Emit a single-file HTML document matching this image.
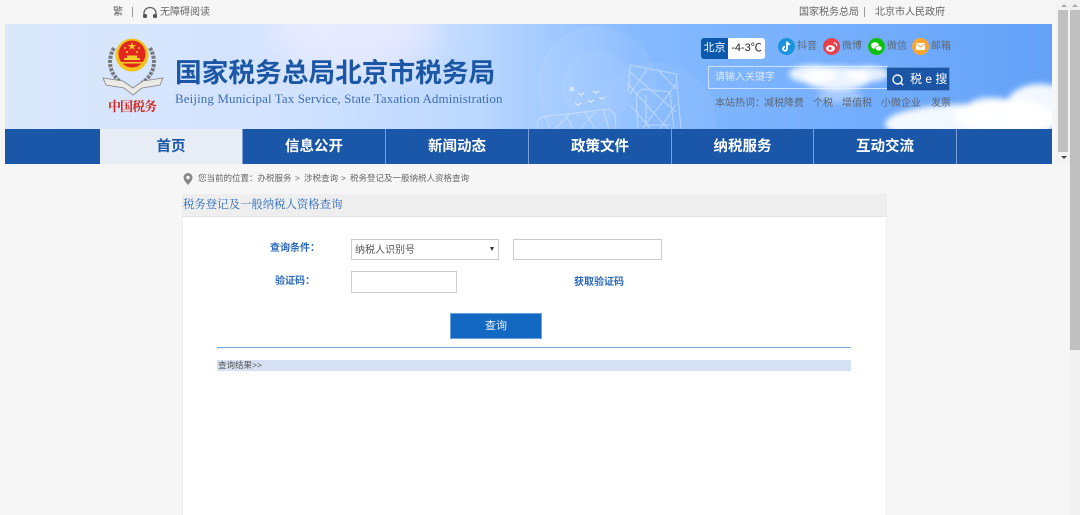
<!DOCTYPE html>
<html lang="zh-CN"><head><meta charset="utf-8"><title>税务登记及一般纳税人资格查询</title>
<style>
*{margin:0;padding:0;box-sizing:border-box}
html,body{width:1080px;height:515px;overflow:hidden;background:#f6f6f6;font-family:"Liberation Sans","Noto Sans CJK SC",sans-serif}
.a{position:absolute;white-space:nowrap}
#root{position:relative;width:1080px;height:515px;overflow:hidden}
.t{font-size:10px;color:#5d6670;line-height:14px}
.c{font-size:8.500px;line-height:12px;color:#666;top:172px}
.nav{top:129px;height:35px;line-height:36px;text-align:center;font-size:14.500px;font-weight:bold;color:#fff;border-right:1px solid #7a9fd0}
.lb{font-size:10px;line-height:14px;font-weight:bold;color:#2a68b8}
.ip{background:#fff;border:1px solid #ccc}
</style></head><body><div id="root">

<div class="a t" style="left:113px;top:5px;color:#666;margin-top:1px">繁</div>
<div class="a" style="left:132px;top:7px;width:1px;height:10px;background:#999"></div>
<svg class="a" style="left:142px;top:6px" width="16" height="13" viewBox="0 0 16 13"><path d="M2 9V7a6 5.500 0 0 1 12 0v2" fill="none" stroke="#666" stroke-width="1.300"/><rect x="1" y="8" width="4" height="4" rx="1.500" fill="#555"/><rect x="11" y="8" width="4" height="4" rx="1.500" fill="#555"/></svg>
<div class="a t" style="left:160px;top:6px;color:#666">无障碍阅读</div>
<div class="a t" style="left:799px;top:6px;color:#666">国家税务总局</div>
<div class="a" style="left:864px;top:7px;width:1px;height:10px;background:#999"></div>
<div class="a t" style="left:875px;top:6px;color:#666">北京市人民政府</div>

<svg class="a" style="left:5px;top:24px" width="1047" height="105" viewBox="0 0 1047 105">
<defs>
<linearGradient id="g" x1="0" x2="1" y1="0" y2="0"><stop offset="0" stop-color="#dbe8fb"/><stop offset=".25" stop-color="#d3e3ff"/><stop offset=".45" stop-color="#bcd8ff"/><stop offset=".6" stop-color="#86baff"/><stop offset=".8" stop-color="#74aefd"/><stop offset="1" stop-color="#64a2f8"/></linearGradient>
<filter id="b" x="-20%" y="-40%" width="140%" height="180%"><feGaussianBlur stdDeviation="3"/></filter>
<filter id="b2" x="-30%" y="-30%" width="160%" height="160%"><feGaussianBlur stdDeviation="18"/></filter>
</defs>
<rect width="1047" height="105" fill="url(#g)"/>
<ellipse cx="350" cy="5" rx="85" ry="45" fill="#f4efff" opacity=".7" filter="url(#b2)"/>
<circle cx="592" cy="62" r="60" fill="#fff" opacity=".07"/>
<circle cx="592" cy="62" r="36" fill="#fff" opacity=".06"/>
<circle cx="650" cy="100" r="62" fill="#fff" opacity=".05"/>
<circle cx="567" cy="65" r="2.500" fill="#fff" opacity=".5"/>
<g fill="none" stroke="#dcebff" stroke-width="1" opacity=".6">
<path d="M623 68l2-27 46 9 5 55M633 105l-2-34 6-6 28 3 4 37M641 71v30h24"/>
<path d="M625 48l46 40M623 60l40 45M652 45l19 20M626 82l20 23M642 45l-17 25M671 60l-34 45M671 80l-16 25"/>
<path d="M533 105l-1-6 4-6 68-8 6 5 1 15M540 92l5 13M560 90l8 15M580 88l10 17M598 86l6 19M550 105l15-15M575 105l15-17"/>
</g>
<path d="M573 69l3 2 3-2M588 67l3 2 3-2M594 73l3 2 3-2M570 79l3 2 3-2M583 76l3 2 3-2" fill="none" stroke="#eaf3ff"/>
<g fill="#fff" filter="url(#b)">
<ellipse cx="808" cy="50" rx="24" ry="9" opacity=".85"/><ellipse cx="832" cy="54" rx="34" ry="12" opacity=".85"/><ellipse cx="862" cy="50" rx="22" ry="8" opacity=".8"/><ellipse cx="835" cy="72" rx="22" ry="7" opacity=".35"/>
<ellipse cx="965" cy="100" rx="85" ry="20" opacity=".92"/><ellipse cx="1035" cy="82" rx="34" ry="22" opacity=".92"/><ellipse cx="1000" cy="92" rx="50" ry="17" opacity=".92"/><ellipse cx="985" cy="82" rx="22" ry="9" opacity=".7"/>
</g>
</svg>

<svg class="a" style="left:100px;top:36px" width="66" height="82" viewBox="0 0 66 82">
<g fill="none" stroke="#77797c" stroke-width="4" stroke-dasharray="3 1.200"><path d="M14 12C7 24 9 38 22 47"/><path d="M50 12c7 12 5 26-8 35"/></g>
<path d="M3 42l20 3 10 7 10-7 20-3-3 7-18 3-9 7-9-7-18-3z" fill="#eceae6" stroke="#808284" stroke-width=".8"/>
<circle cx="32" cy="19" r="16.500" fill="#f2c318"/><circle cx="32" cy="18" r="13.500" fill="#e1271d"/>
<path d="M32 6l1 3h3.200l-2.600 1.800 1 3-2.600-1.800-2.600 1.800 1-3-2.600-1.800H31z" fill="#f4cb2d"/>
<g fill="#f4cb2d"><circle cx="25" cy="12" r="1"/><circle cx="39" cy="12" r="1"/><circle cx="27" cy="16" r="1"/><circle cx="37" cy="16" r="1"/>
<rect x="24" y="22" width="16" height="2"/><rect x="27" y="19.500" width="10" height="2.500"/><rect x="21" y="26" width="22" height="1.500"/></g>
<text x="8" y="75" font-family="'Noto Serif CJK SC',serif" font-size="13" font-weight="bold" fill="#d5281f" textLength="49">中国税务</text>
</svg>

<div class="a" style="left:175px;top:52px;font-size:26.700px;line-height:38px;font-weight:bold;color:#1c57a5;font-family:'Noto Sans CJK SC',sans-serif">国家税务总局北京市税务局</div>
<div class="a" style="left:175px;top:91px;font-family:'Liberation Serif',serif;font-size:13px;line-height:16px;letter-spacing:.1px;color:#3f6fb5">Beijing Municipal Tax Service, State Taxation Administration</div>

<div class="a" style="left:701px;top:38px;width:27px;height:21px;background:#0b58ad;border-radius:3px 0 0 3px;color:#fff;font-size:11px;line-height:21px;text-align:center">北京</div>
<div class="a" style="left:728px;top:38px;width:37px;height:21px;background:#fff;border-radius:0 3px 3px 0;color:#222;font-size:11px;line-height:21px;text-align:center">-4-3℃</div>

<svg class="a" style="left:778px;top:38px" width="17" height="17" viewBox="0 0 17 17"><circle cx="8.500" cy="8.500" r="8.500" fill="#1b92dc"/><path d="M9 3.500v7.200a2 2 0 1 1-2-2M9 3.500c.3 1.800 1.500 2.800 3.200 3" fill="none" stroke="#fff" stroke-width="1.800"/></svg>
<div class="a t" style="left:797px;top:40px">抖音</div>
<svg class="a" style="left:823px;top:38px" width="17" height="17" viewBox="0 0 17 17"><circle cx="8.500" cy="8.500" r="8.500" fill="#e8414d"/><ellipse cx="7.500" cy="10.500" rx="4.500" ry="3.200" fill="#fff"/><circle cx="7" cy="10.500" r="1.500" fill="#e8414d"/><path d="M10.500 5c2-.4 3.500 1 3 3" fill="none" stroke="#fff" stroke-width="1.100"/></svg>
<div class="a t" style="left:842px;top:40px">微博</div>
<svg class="a" style="left:868px;top:38px" width="17" height="17" viewBox="0 0 17 17"><circle cx="8.500" cy="8.500" r="8.500" fill="#0fc10f"/><ellipse cx="7" cy="7.500" rx="4" ry="3.200" fill="#fff"/><ellipse cx="10.800" cy="10.300" rx="3.300" ry="2.600" fill="#fff" stroke="#0fc10f" stroke-width=".6"/></svg>
<div class="a t" style="left:887px;top:40px">微信</div>
<svg class="a" style="left:912px;top:38px" width="17" height="17" viewBox="0 0 17 17"><circle cx="8.500" cy="8.500" r="8.500" fill="#fba631"/><rect x="4" y="5" width="9" height="7" rx="1" fill="#fff"/><path d="M4.500 6l4 3 4-3" fill="none" stroke="#fba631"/></svg>
<div class="a t" style="left:931px;top:40px">邮箱</div>

<div class="a" style="left:708px;top:66px;width:180px;height:23px;border:1px solid rgba(235,243,255,.7);border-right:0"></div>
<div class="a" style="left:715px;top:71px;font-size:10px;line-height:14px;color:#dce9fb">请输入关键字</div>
<div class="a" style="left:887px;top:67px;width:63px;height:24px;background:#1b55a5;border:1px solid #5a8ed0;border-left:0"></div>
<svg class="a" style="left:891px;top:73px" width="14" height="14" viewBox="0 0 14 14"><circle cx="6.500" cy="6.500" r="4.500" fill="none" stroke="#fff" stroke-width="1.400"/><path d="M9.700 9.700l2.500 2.500" stroke="#fff" stroke-width="1.400"/></svg>
<div class="a" style="left:910px;top:71px;font-size:12px;line-height:16px;color:#fff">税 e 搜</div>

<div class="a t" style="left:715px;top:97px">本站热词：</div>
<div class="a t" style="left:764px;top:97px">减税降费</div>
<div class="a t" style="left:813px;top:97px">个税</div>
<div class="a t" style="left:842px;top:97px">增值税</div>
<div class="a t" style="left:881px;top:97px">小微企业</div>
<div class="a t" style="left:931px;top:97px">发票</div>

<div class="a" style="left:5px;top:129px;width:1047px;height:35px;background:#1b57a8"></div>
<div class="a nav" style="left:100px;width:143px;background:#e8edf5;color:#1b57a8">首页</div>
<div class="a nav" style="left:243px;width:143px">信息公开</div>
<div class="a nav" style="left:386px;width:143px">新闻动态</div>
<div class="a nav" style="left:529px;width:143px">政策文件</div>
<div class="a nav" style="left:672px;width:142px">纳税服务</div>
<div class="a nav" style="left:814px;width:143px">互动交流</div>

<svg class="a" style="left:183px;top:173px" width="10" height="12" viewBox="0 0 10 12"><path d="M5 0a4.500 4.500 0 0 0-4.500 4.500C.5 7.500 5 12 5 12s4.500-4.500 4.500-7.500A4.500 4.500 0 0 0 5 0z" fill="#888"/><circle cx="5" cy="4.500" r="1.800" fill="#f6f6f6"/></svg>
<div class="a c" style="left:198px">您当前的位置：办税服务</div>
<div class="a c" style="left:295px">&gt;</div>
<div class="a c" style="left:304px">涉税查询</div>
<div class="a c" style="left:341px">&gt;</div>
<div class="a c" style="left:350px">税务登记及一般纳税人资格查询</div>

<div class="a" style="left:182px;top:194px;width:705px;height:23px;background:#eee;border-bottom:1px solid #e4e4e4"></div>
<div class="a" style="left:183px;top:196px;font-family:'Noto Serif CJK SC',serif;font-size:11.400px;line-height:16px;color:#2a68b8">税务登记及一般纳税人资格查询</div>
<div class="a" style="left:182px;top:217px;width:705px;height:298px;background:#fff;border-left:1px solid #eee;border-right:1px solid #eee"></div>

<div class="a lb" style="left:270px;top:242px">查询条件：</div>
<div class="a ip" style="left:351px;top:239px;width:148px;height:21px"></div>
<div class="a" style="left:355px;top:244px;font-size:10px;line-height:14px;color:#555">纳税人识别号</div>
<div class="a" style="left:490px;top:247px;width:0;height:0;border-left:2.500px solid transparent;border-right:2.500px solid transparent;border-top:4px solid #333"></div>
<div class="a ip" style="left:513px;top:239px;width:149px;height:21px"></div>

<div class="a lb" style="left:275px;top:275px">验证码：</div>
<div class="a ip" style="left:351px;top:271px;width:106px;height:22px"></div>
<div class="a lb" style="left:574px;top:276px">获取验证码</div>

<div class="a" style="left:450px;top:313px;width:92px;height:26px;background:#1368c2;border:1px solid #6ba1de;color:#e8f0fa;font-size:11px;line-height:24px;text-align:center">查询</div>
<div class="a" style="left:217px;top:347px;width:634px;height:1px;background:#7aa6dc"></div>
<div class="a" style="left:217px;top:360px;width:634px;height:11px;background:#d5e1f2;font-size:8.500px;line-height:11px;color:#555;padding-left:1px">查询结果&gt;&gt;</div>

<div class="a" style="left:1056px;top:0;width:14px;height:164px;background:#f3f3f3"></div>
<div class="a" style="left:1058px;top:10px;width:10px;height:142px;background:#c0c0c0"></div>
<div class="a" style="left:1070px;top:0;width:10px;height:515px;background:#f1f1f1"></div>
<div class="a" style="left:1070px;top:10px;width:10px;height:340px;background:#c0c0c0"></div>
<div class="a" style="left:1061px;top:4px;width:0;height:0;border-left:3px solid transparent;border-right:3px solid transparent;border-bottom:3px solid #aaa"></div>
<div class="a" style="left:1072px;top:4px;width:0;height:0;border-left:3px solid transparent;border-right:3px solid transparent;border-bottom:3px solid #aaa"></div>
<div class="a" style="left:1061px;top:156px;width:0;height:0;border-left:3px solid transparent;border-right:3px solid transparent;border-top:3px solid #444"></div>
</div></body></html>
